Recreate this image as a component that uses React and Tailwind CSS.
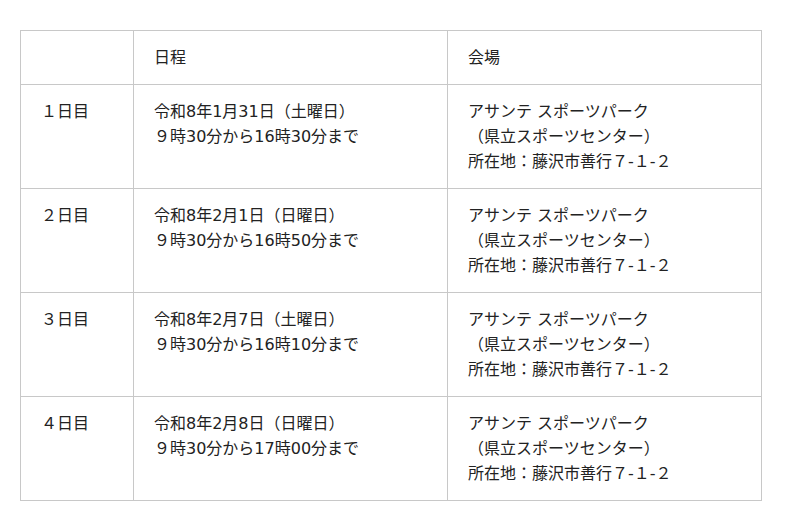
import React from 'react';

const rows = [
  { day: '１日目', date: '令和8年1月31日（土曜日）', time: '９時30分から16時30分まで' },
  { day: '２日目', date: '令和8年2月1日（日曜日）', time: '９時30分から16時50分まで' },
  { day: '３日目', date: '令和8年2月7日（土曜日）', time: '９時30分から16時10分まで' },
  { day: '４日目', date: '令和8年2月8日（日曜日）', time: '９時30分から17時00分まで' },
];

export default function App() {
  const cell = 'border border-[#c8c8c8] px-5 pt-[14px] pb-[14px] align-top text-left font-normal';
  return (
    <div className="min-h-screen bg-white pt-[30px] pl-5 text-[16px] leading-[25px] text-[#222]" style={{ fontFamily: '"DejaVu Sans", "Noto Sans CJK JP", sans-serif' }}>
      <table className="w-[742px] border-collapse">
        <thead>
          <tr>
            <th className={`${cell} w-[113px]`}></th>
            <th className={`${cell} w-[314px]`}>日程</th>
            <th className={cell}>会場</th>
          </tr>
        </thead>
        <tbody>
          {rows.map((r) => (
            <tr key={r.day}>
              <td className={cell}>{r.day}</td>
              <td className={cell}>
                <div>{r.date}</div>
                <div>{r.time}</div>
              </td>
              <td className={cell}>
                <div>アサンテ スポーツパーク</div>
                <div>（県立スポーツセンター）</div>
                <div>所在地：藤沢市善行７-１-２</div>
              </td>
            </tr>
          ))}
        </tbody>
      </table>
    </div>
  );
}
